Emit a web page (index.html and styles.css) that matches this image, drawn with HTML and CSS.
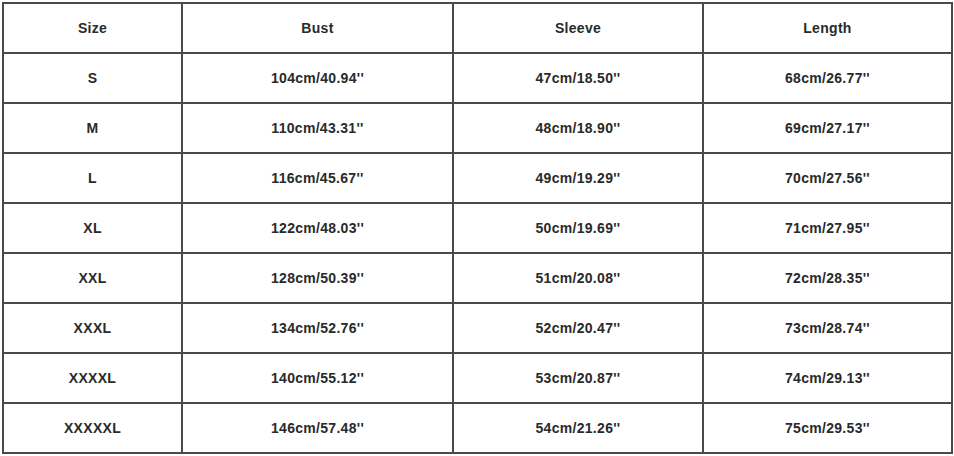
FILE: index.html
```html
<!DOCTYPE html>
<html>
<head>
<meta charset="utf-8">
<link rel="stylesheet" href="styles.css">
</head>
<body>
<table class="size-chart">
  <colgroup>
    <col class="c-size">
    <col class="c-bust">
    <col class="c-sleeve">
    <col class="c-length">
  </colgroup>
  <tr><td>Size</td><td>Bust</td><td>Sleeve</td><td>Length</td></tr>
  <tr><td>S</td><td>104cm/40.94''</td><td>47cm/18.50''</td><td>68cm/26.77''</td></tr>
  <tr><td>M</td><td>110cm/43.31''</td><td>48cm/18.90''</td><td>69cm/27.17''</td></tr>
  <tr><td>L</td><td>116cm/45.67''</td><td>49cm/19.29''</td><td>70cm/27.56''</td></tr>
  <tr><td>XL</td><td>122cm/48.03''</td><td>50cm/19.69''</td><td>71cm/27.95''</td></tr>
  <tr><td>XXL</td><td>128cm/50.39''</td><td>51cm/20.08''</td><td>72cm/28.35''</td></tr>
  <tr><td>XXXL</td><td>134cm/52.76''</td><td>52cm/20.47''</td><td>73cm/28.74''</td></tr>
  <tr><td>XXXXL</td><td>140cm/55.12''</td><td>53cm/20.87''</td><td>74cm/29.13''</td></tr>
  <tr><td>XXXXXL</td><td>146cm/57.48''</td><td>54cm/21.26''</td><td>75cm/29.53''</td></tr>
</table>
</body>
</html>
```
FILE: styles.css
```css
html, body {
  margin: 0;
  padding: 0;
  background: #ffffff;
}
body {
  padding: 2px 0 0 2px;
}
.size-chart {
  border-collapse: separate;
  border-spacing: 0;
  table-layout: fixed;
  width: 951px;
  border-top: 2px solid #4a4a4a;
  border-left: 2px solid #4a4a4a;
  font-family: "Liberation Sans", Arial, sans-serif;
  font-size: 14px;
  font-weight: bold;
  letter-spacing: 0.3px;
  color: #2a2a2a;
}
.c-size { width: 179px; }
.c-bust { width: 271px; }
.c-sleeve { width: 250px; }
.c-length { width: 249px; }
.size-chart td {
  box-sizing: border-box;
  border-right: 2px solid #4a4a4a;
  border-bottom: 2px solid #4a4a4a;
  height: 50px;
  padding: 0;
  text-align: center;
  vertical-align: middle;
}
```
